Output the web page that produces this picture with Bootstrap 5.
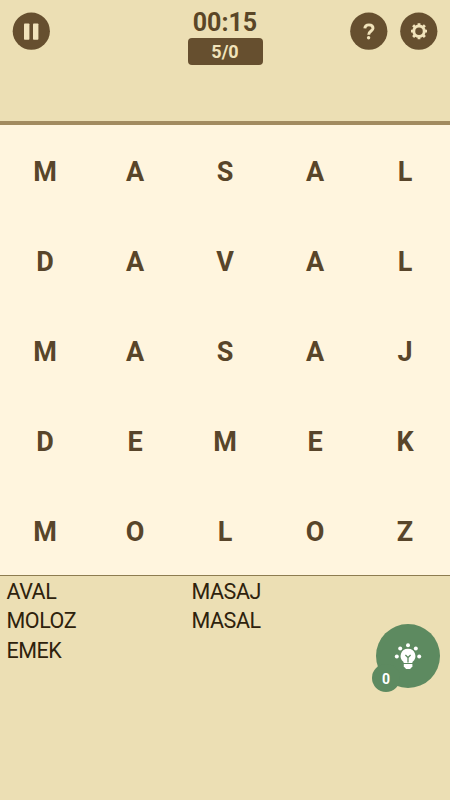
<!DOCTYPE html>
<html lang="tr">
<head>
<meta charset="utf-8">
<meta name="viewport" content="width=device-width, initial-scale=1">
<title>Kelime Avı</title>
<link href="https://cdn.jsdelivr.net/npm/bootstrap@5.3.0/dist/css/bootstrap.min.css" rel="stylesheet">
<style>
body { font-family: Roboto, sans-serif; background: #ecdfb4; color: #5a4627; }
.game { height: 100vh; }
.topbar { height: 125px; padding: 12px 12px 0; border-bottom: 4px solid #a28b5f; }
.side { width: 88px; }
.round-btn { width: 38px; height: 38px; background: none; border: 0; }
.clock { font-size: 25px; line-height: 26px; margin-top: -2px; }
.score { width: 75px; height: 27px; margin-top: 2px; border-radius: 4px; background: #664f2f; color: #f1e3bb; font-size: 18px; line-height: 27px; }
.board { height: 450px; background: #fff5de; }
.cell { height: 90px; line-height: 94px; font-size: 27px; color: #58452a; }
.words { border-top: 1px solid #8d7c50; padding: 1px 0 0 6.5px; font-size: 21.5px; letter-spacing: -.45px; line-height: 29.3px; color: #2e220c; }
.words .list { width: 185px; }
.hint { right: 10px; bottom: 112px; width: 64px; height: 64px; background: #5d8a60; border: 0; }
.count { left: -4px; bottom: -4px; width: 28px; height: 28px; padding-top: 2px; background: #5d8a60; color: #fff; font-size: 14px; }
</style>
</head>
<body>
<main class="game d-flex flex-column position-relative overflow-hidden">
  <header class="topbar d-flex justify-content-between align-items-start flex-shrink-0">
    <div class="side">
      <button class="round-btn rounded-circle p-0 d-block" aria-label="Duraklat">
        <svg class="d-block" width="38" height="38" viewBox="0 0 38 38" fill="#f1e3bb"><circle cx="19.3" cy="19.2" r="18.6" fill="#664f2f"/><rect x="12" y="11.4" width="5.4" height="16.4" rx=".8"/><rect x="21" y="11.4" width="5.4" height="16.4" rx=".8"/></svg>
      </button>
    </div>
    <div class="d-flex flex-column align-items-center">
      <div class="clock fw-bold">00:15</div>
      <div class="score text-center fw-bold">5/0</div>
    </div>
    <div class="side d-flex justify-content-between">
      <button class="round-btn rounded-circle p-0" aria-label="Yardım">
        <svg class="d-block" width="38" height="38" viewBox="0 0 38 38" fill="none" stroke="#f1e3bb" stroke-width="2.9"><circle cx="18.8" cy="19.2" r="18.6" fill="#664f2f" stroke="none"/><path d="M14.8 16.4C15 13.8 16.5 12.9 18.9 12.9C21.5 12.9 23 14.1 23 16.2C23 19 18.8 19.1 18.7 22.7"/><circle cx="18.6" cy="25.7" r="1.7" fill="#f1e3bb" stroke="none"/></svg>
      </button>
      <button class="round-btn rounded-circle p-0" aria-label="Ayarlar">
        <svg class="d-block" width="38" height="38" viewBox="0 0 38 38"><circle cx="18.8" cy="19.2" r="18.6" fill="#664f2f"/><g transform="translate(19 19.2)" fill="none" stroke="#f1e3bb"><circle r="5.2" stroke-width="2.9"/><path stroke-width="2.8" d="M0-5.5V-8M0 5.5V8M-5.5 0H-8M5.5 0H8M-3.9-3.9L-5.9-5.9M3.9-3.9L5.9-5.9M-3.9 3.9L-5.9 5.9M3.9 3.9L5.9 5.9"/></g></svg>
      </button>
    </div>
  </header>

  <section class="board flex-shrink-0 text-center fw-bold">
    <div class="row g-0"><div class="col cell">M</div><div class="col cell">A</div><div class="col cell">S</div><div class="col cell">A</div><div class="col cell">L</div></div>
    <div class="row g-0"><div class="col cell">D</div><div class="col cell">A</div><div class="col cell">V</div><div class="col cell">A</div><div class="col cell">L</div></div>
    <div class="row g-0"><div class="col cell">M</div><div class="col cell">A</div><div class="col cell">S</div><div class="col cell">A</div><div class="col cell">J</div></div>
    <div class="row g-0"><div class="col cell">D</div><div class="col cell">E</div><div class="col cell">M</div><div class="col cell">E</div><div class="col cell">K</div></div>
    <div class="row g-0"><div class="col cell">M</div><div class="col cell">O</div><div class="col cell">L</div><div class="col cell">O</div><div class="col cell">Z</div></div>
  </section>

  <section class="words d-flex flex-grow-1">
    <div class="list"><div>AVAL</div><div>MOLOZ</div><div>EMEK</div></div>
    <div class="list"><div>MASAJ</div><div>MASAL</div></div>
  </section>

  <button class="hint rounded-circle position-absolute p-0" aria-label="İpucu">
    <svg class="d-block" width="64" height="64" viewBox="0 0 64 64" fill="#fff"><circle cx="32" cy="21.3" r="2"/><circle cx="24.2" cy="24.5" r="2"/><circle cx="39.8" cy="24.5" r="2"/><circle cx="20.8" cy="32.4" r="2"/><circle cx="43.2" cy="32.4" r="2"/><path d="M32 24.8A7.3 7.3 0 0 0 27.6 38V38.9H36.4V38A7.3 7.3 0 0 0 32 24.8Z"/><path d="M27.8 40.1H36.4V42.4L34.1 45H30.1L27.8 42.4Z"/><path d="M29.4 31L32 33.5L34.6 31M32 33V38.5" fill="none" stroke="#5d8a60" stroke-width="1.3"/></svg>
    <span class="count rounded-circle position-absolute d-flex align-items-center justify-content-center fw-bold">0</span>
  </button>
</main>
<script src="https://cdn.jsdelivr.net/npm/bootstrap@5.3.0/dist/js/bootstrap.bundle.min.js"></script>
</body>
</html>
